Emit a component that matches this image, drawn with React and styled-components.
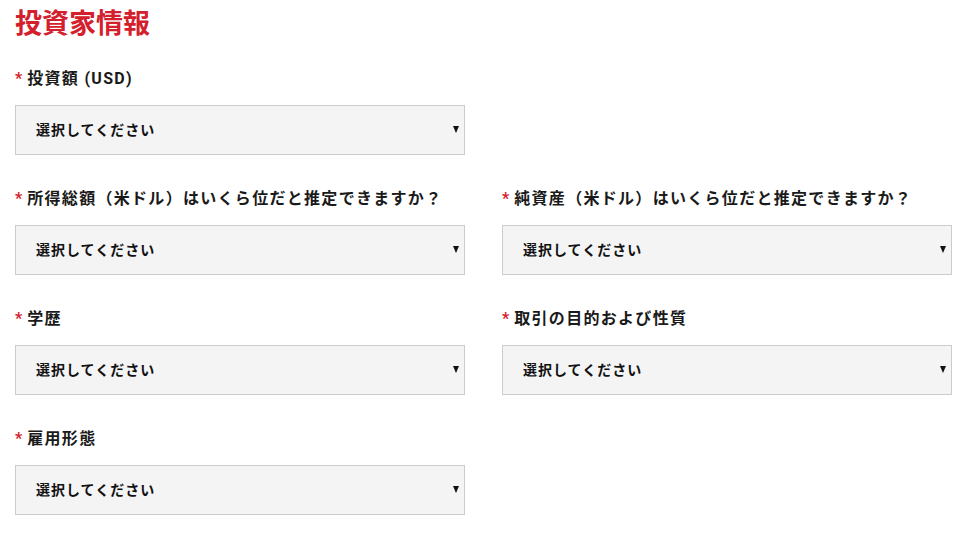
import styled, { createGlobalStyle } from "styled-components";

const fields = [
  { id: "amount", label: "投資額 (USD)", col: 1 },
  { id: "income", label: "所得総額（米ドル）はいくら位だと推定できますか？", col: 1 },
  { id: "assets", label: "純資産（米ドル）はいくら位だと推定できますか？", col: 2 },
  { id: "education", label: "学歴", col: 1 },
  { id: "purpose", label: "取引の目的および性質", col: 2 },
  { id: "employment", label: "雇用形態", col: 1 },
];

function App() {
  return (
    <>
      <GlobalStyle />
      <Page>
        <Title>投資家情報</Title>
        <Grid>
          {fields.map((f) => (
            <Field key={f.id} $col={f.col}>
              <Label htmlFor={f.id}>
                <Required>*</Required>
                {f.label}
              </Label>
              <SelectWrap>
                <Select id={f.id} defaultValue="">
                  <option value="">選択してください</option>
                </Select>
              </SelectWrap>
            </Field>
          ))}
        </Grid>
      </Page>
    </>
  );
}

export default App;

const GlobalStyle = createGlobalStyle`
  body {
    margin: 0;
    background: #fff;
    font-family: Roboto, "Noto Sans CJK JP", sans-serif;
    color: #222;
  }
`;

const Page = styled.div`
  width: 937px;
  padding: 7px 15px 0;
`;

const Title = styled.h1`
  margin: 0 0 26px;
  font-size: 27px;
  line-height: 34px;
  font-weight: 700;
  color: #d4202c;
`;

const Grid = styled.div`
  display: grid;
  grid-template-columns: 450px 450px;
  column-gap: 37px;
  row-gap: 32px;
`;

const Field = styled.div`
  grid-column: ${({ $col }) => $col};
  display: flex;
  flex-direction: column;
  gap: 14px;
`;

const Label = styled.label`
  font-size: 16px;
  line-height: 24px;
  font-weight: 700;
  letter-spacing: 1.3px;
  color: #1a1a1a;
  white-space: nowrap;
`;

const Required = styled.span`
  color: #d4202c;
  margin-right: 5px;
  letter-spacing: 0;
`;

const SelectWrap = styled.div`
  position: relative;

  &::after {
    content: "";
    position: absolute;
    right: 6px;
    top: 21px;
    border-left: 3.5px solid transparent;
    border-right: 3.5px solid transparent;
    border-top: 7px solid #111;
    pointer-events: none;
  }
`;

const Select = styled.select`
  appearance: none;
  width: 100%;
  height: 50px;
  box-sizing: border-box;
  border: 1px solid #cccccc;
  border-radius: 0;
  background: #f4f4f4;
  padding: 0 20px;
  font-family: Roboto, "Noto Sans CJK JP", sans-serif;
  font-size: 14px;
  font-weight: 700;
  letter-spacing: 1px;
  color: #111;
  outline: none;
`;
